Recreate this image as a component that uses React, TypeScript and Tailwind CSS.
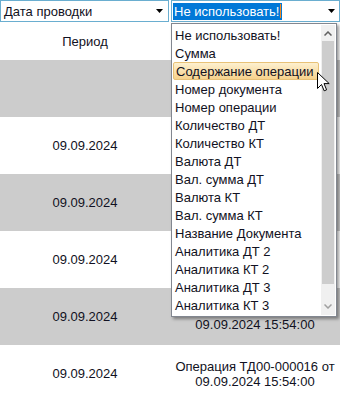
import React from 'react';

const fields = [
  'Не использовать!',
  'Сумма',
  'Содержание операции',
  'Номер документа',
  'Номер операции',
  'Количество ДТ',
  'Количество КТ',
  'Валюта ДТ',
  'Вал. сумма ДТ',
  'Валюта КТ',
  'Вал. сумма КТ',
  'Название Документа',
  'Аналитика ДТ 2',
  'Аналитика КТ 2',
  'Аналитика ДТ 3',
  'Аналитика КТ 3',
];

// rows under the open list only show what is not covered by it
const rows = [
  { date: '', op: '', when: '' },
  { date: '09.09.2024', op: '', when: '' },
  { date: '09.09.2024', op: '', when: '' },
  { date: '09.09.2024', op: '', when: '' },
  { date: '09.09.2024', op: 'hidden', when: '09.09.2024 15:54:00' },
  { date: '09.09.2024', op: 'Операция ТД00-000016 от', when: '09.09.2024 15:54:00' },
];

const Caret = () => (
  <svg width="8" height="4" viewBox="0 0 8 4" className="shrink-0">
    <path d="M0 0 H7 L3.5 4 Z" fill="#000" />
  </svg>
);

const Chevron = ({ up, color }: { up?: boolean; color: string }) => (
  <svg width="8" height="5" viewBox="0 0 8 5">
    <path d={up ? 'M0.5 4.5 L4 1 L7.5 4.5' : 'M0.5 0.5 L4 4 L7.5 0.5'} fill="none" stroke={color} strokeWidth="1.5" />
  </svg>
);

const Cursor = () => (
  <svg width="13" height="20" viewBox="0 0 13 20">
    <path d="M0.5 0.5 V16.5 L4.5 12.5 L7.2 18.8 L9.6 17.8 L7 11.6 H12.2 Z" fill="#fff" stroke="#000" strokeWidth="1" strokeLinejoin="miter" />
  </svg>
);

export default function App() {
  return (
    <div className="relative w-[340px] h-[401px] overflow-hidden bg-white text-[13px] leading-[15px] text-[#111122] font-['Liberation_Sans',Arial,sans-serif]">
      {/* Selectors */}
      <div className="flex h-[22px] gap-[2px]">
        <div className="flex w-[169px] items-center justify-between border border-[#6aaed0] pl-[3px] pr-[4px]">
          <span>Дата проводки</span>
          <Caret />
        </div>
        <div className="flex flex-1 items-center justify-between border border-[#6aaed0] pl-[1px] pr-[3px]">
          <span className="flex items-center bg-[#0078d7] text-white h-[17px] px-[1px]">
            Не использовать!
            <span className="ml-[1px] h-[14px] w-[1px] bg-[#f08a24]" />
          </span>
          <Caret />
        </div>
      </div>

      {/* Table */}
      <div className="grid grid-cols-2 h-[38px] items-center text-center">
        <span>Период</span>
        <span />
      </div>
      {rows.map((r, i) => (
        <div
          key={i}
          className={`grid grid-cols-2 h-[57px] items-center text-center ${i % 2 === 0 ? 'bg-[#cccccc]' : 'bg-white'}`}
        >
          <span>{r.date}</span>
          {r.when ? (
            <span className="flex flex-col">
              <span className={r.op === 'hidden' ? 'invisible' : ''}>
                {r.op === 'hidden' ? '\u00a0' : r.op}
              </span>
              <span>{r.when}</span>
            </span>
          ) : (
            <span />
          )}
        </div>
      ))}

      {/* Dropdown list */}
      <div className="absolute left-[171px] top-[23px] w-[166px] h-[294px] flex border border-[#828790] bg-white shadow-[2px_2px_3px_rgba(0,0,0,0.4)]">
        <div className="flex-1 pt-[2px] pl-[1px] pr-[2px]">
          {fields.map((f, i) => (
            <div
              key={f}
              className={`h-[18px] flex items-center px-[2px] whitespace-nowrap ${
                i === 2
                  ? 'bg-gradient-to-b from-[#fdf0cf] to-[#f6d28c] border border-[#e8c278] rounded-[2px] px-[1px]'
                  : ''
              }`}
            >
              {f}
            </div>
          ))}
        </div>
        <div className="w-[14px] mt-[1px] mb-[1px] mr-[1px] flex flex-col bg-[#f0f0f0]">
          <div className="h-[16px] flex items-center justify-center">
            <Chevron up color="#606060" />
          </div>
          <div className="h-[243px] mx-[1px] bg-[#cdcdcd]" />
          <div className="flex-1" />
          <div className="h-[17px] flex items-center justify-center">
            <Chevron color="#a0a0a0" />
          </div>
        </div>
      </div>

      {/* Mouse pointer */}
      <div className="absolute left-[317px] top-[72px]">
        <Cursor />
      </div>
    </div>
  );
}
